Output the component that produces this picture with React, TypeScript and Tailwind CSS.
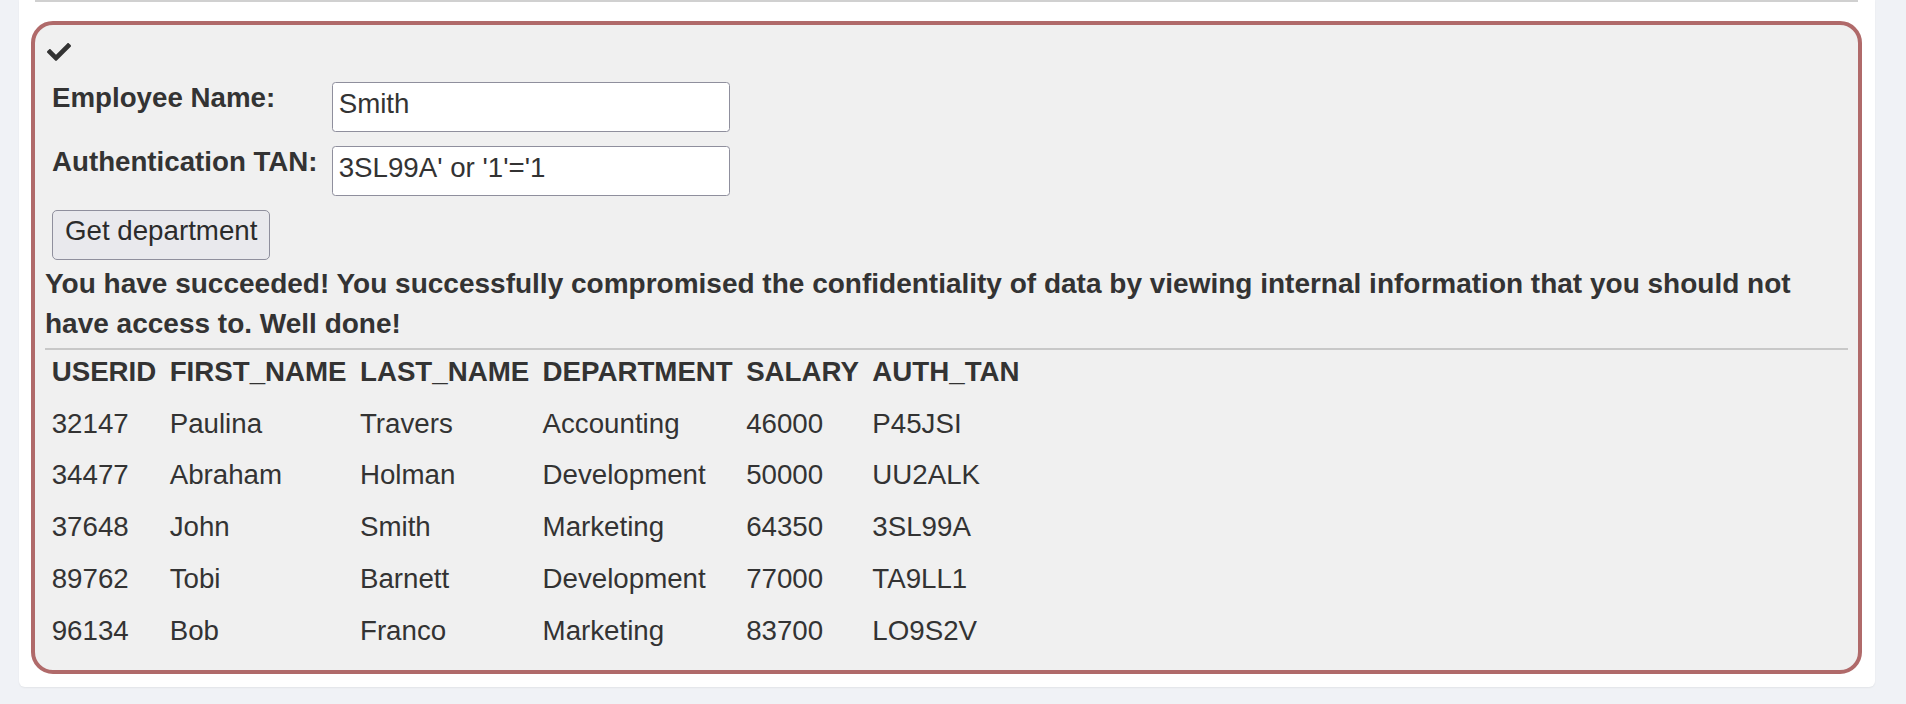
import React from "react"

const rows = [
  ["32147", "Paulina", "Travers", "Accounting", "46000", "P45JSI"],
  ["34477", "Abraham", "Holman", "Development", "50000", "UU2ALK"],
  ["37648", "John", "Smith", "Marketing", "64350", "3SL99A"],
  ["89762", "Tobi", "Barnett", "Development", "77000", "TA9LL1"],
  ["96134", "Bob", "Franco", "Marketing", "83700", "LO9S2V"],
]

const headers = ["USERID", "FIRST_NAME", "LAST_NAME", "DEPARTMENT", "SALARY", "AUTH_TAN"]

const CheckIcon = () => (
  <svg viewBox="0 65 512 382" className="h-[18px] w-[24px] fill-[#333]">
    <path d="M173.898 439.404l-166.4-166.4c-9.997-9.997-9.997-26.206 0-36.204l36.203-36.204c9.997-9.998 26.207-9.998 36.204 0L192 312.69 432.095 72.596c9.997-9.997 26.207-9.997 36.204 0l36.203 36.204c9.997 9.997 9.997 26.206 0 36.204l-294.4 294.401c-9.998 9.997-26.207 9.997-36.204-.001z" />
  </svg>
)

export default function App() {
  return (
    <div className="min-h-screen bg-[#f0f2f6] pl-[19px] pr-[31px] font-['Liberation_Sans',Arial,sans-serif] text-[27.7px] text-[#333]">
      <div className="rounded-b-[6px] bg-white pl-[12px] pr-[13px] pb-[13px] shadow-[0_1px_2px_rgba(0,0,0,0.06)]">
        <div className="mx-[4px] h-[2px] bg-[#d0d0d0]" />
        <div className="mt-[19px] rounded-[22px] border-4 border-[#b06a6a] bg-[#f0f0f0] pl-[10px] pr-[10px] pt-[18px] pb-[13.4px]">
          <div className="ml-[2px] flex h-[18px]">
            <CheckIcon />
          </div>

          <div className="mt-[21px] flex flex-col gap-[14px] pl-[7px]">
            <div className="flex items-start">
              <label className="w-[279.7px] font-bold leading-[31.8px]">Employee Name:</label>
              <input
                readOnly
                value="Smith"
                className="h-[50px] w-[398px] rounded-[3.5px] border border-[#8f8f9d] bg-white pl-[6px] pb-[6px] leading-[31.8px] text-[#333] outline-none"
              />
            </div>
            <div className="flex items-start">
              <label className="w-[279.7px] font-bold leading-[31.8px]">Authentication TAN:</label>
              <input
                readOnly
                value="3SL99A' or '1'='1"
                className="h-[50px] w-[398px] rounded-[3.5px] border border-[#8f8f9d] bg-white pl-[6px] pb-[6px] leading-[31.8px] text-[#333] outline-none"
              />
            </div>
            <div>
              <button className="h-[50px] rounded-[5px] border border-[#8f8f9d] bg-[#e9e9ed] px-[12px] pb-[8px] leading-[31.8px] text-[#2b2b2b]">
                Get department
              </button>
            </div>
          </div>

          <p className="mt-[4px] text-[28px] font-bold leading-[39.6px]">
            You have succeeded! You successfully compromised the confidentiality of data by viewing internal information that you should not have access to. Well done!
          </p>

          <div className="mt-[4.8px] h-[2px] bg-[#c8c8c8]" />

          <table className="border-collapse text-left leading-[31.8px]">
            <thead>
              <tr>
                {headers.map((h) => (
                  <th key={h} className="px-[6.7px] pt-[5.6px] pb-[10.2px] font-bold">
                    {h}
                  </th>
                ))}
              </tr>
            </thead>
            <tbody>
              {rows.map((r) => (
                <tr key={r[0]}>
                  {r.map((c, i) => (
                    <td key={i} className="px-[6.7px] py-[10px]">
                      {c}
                    </td>
                  ))}
                </tr>
              ))}
            </tbody>
          </table>
        </div>
      </div>
    </div>
  )
}
